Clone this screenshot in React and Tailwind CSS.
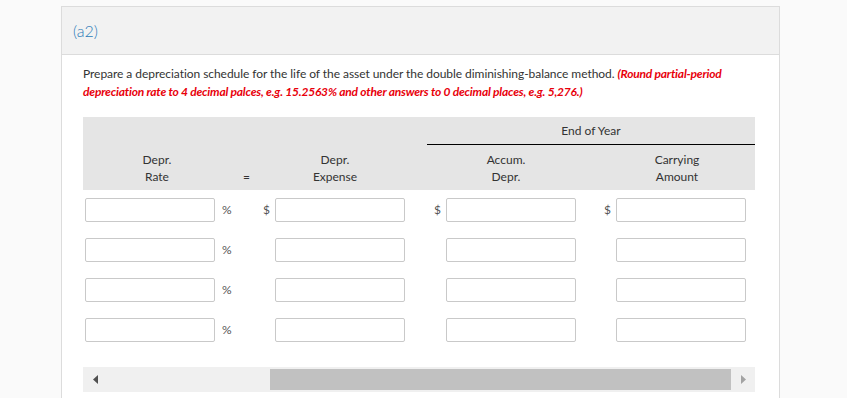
import React from 'react'

const font = { fontFamily: 'Lato, "Open Sans", sans-serif' }

function Box() {
  return <input type="text" className="h-[24px] w-[130px] rounded-[2px] border border-[#c9c9c9] bg-white px-1 outline-none" />
}

function Row({ first }) {
  return (
    <div className="flex h-[24px] items-center text-[12px] text-[#555]">
      <div className="w-[138px] pl-[2px]"><Box /></div>
      <div className="w-[37px] pl-[1px]">%</div>
      <div className="w-[17px] pl-[5px]">{first ? '$' : ''}</div>
      <Box />
      <div className="w-[41px] pl-[29px]">{first ? '$' : ''}</div>
      <Box />
      <div className="w-[40px] pl-[28px]">{first ? '$' : ''}</div>
      <Box />
    </div>
  )
}

export default function App() {
  return (
    <div className="min-h-[398px] bg-[#fafafa] pt-[6px]" style={font}>
      <div className="ml-[61px] w-[719px] border border-[#dcdcdc] bg-white pb-[20px]">
        <div className="flex h-[48px] items-center border-b border-[#dcdcdc] bg-[#f2f2f2] pl-[11px] text-[16px] font-light text-[#2a7ab8]">
          (a2)
        </div>

        <div className="pl-[21px]">
          <p className="mt-[10px] w-[672px] text-[12px] leading-[18px] tracking-[-0.05px] text-[#333]">
            Prepare a depreciation schedule for the life of the asset under the double diminishing-balance method.{' '}
            <span className="font-bold italic tracking-[-0.2px] text-[#e8000b]">
              (Round partial-period depreciation rate to 4 decimal palces, e.g. 15.2563% and other answers to 0 decimal places, e.g. 5,276.)
            </span>
          </p>

          <div className="mt-[16px] w-[672px] bg-[#e5e5e5] text-[12px] text-[#333]">
            <div className="ml-[344px] flex h-[28px] items-center justify-center border-b border-black">
              End of Year
            </div>
            <div className="flex h-[45px] items-center leading-[17px]">
              <div className="w-[148px] text-center">Depr.<br />Rate</div>
              <div className="w-[31px] self-end pb-[5px] text-center">=</div>
              <div className="w-[146px] text-center">Depr.<br />Expense</div>
              <div className="w-[196px] text-center">Accum.<br />Depr.</div>
              <div className="w-[146px] text-center">Carrying<br />Amount</div>
            </div>
          </div>

          <div className="flex flex-col gap-[16px] pt-[8px]">
            <Row first />
            <Row />
            <Row />
            <Row />
          </div>

          <div className="mt-[25px] flex h-[25px] w-[672px] items-center bg-[#f0f0f0]">
            <div className="flex w-[187px] items-center pl-[10px]">
              <svg width="6" height="9" viewBox="0 0 6 9"><path d="M5 0 L0 4.5 L5 9 Z" fill="#505050" /></svg>
            </div>
            <div className="h-[21px] w-[461px] bg-[#c1c1c1]" />
            <div className="flex flex-1 items-center pl-[10px]">
              <svg width="6" height="9" viewBox="0 0 6 9"><path d="M0 0 L5 4.5 L0 9 Z" fill="#a3a3a3" /></svg>
            </div>
          </div>
        </div>
      </div>
    </div>
  )
}
